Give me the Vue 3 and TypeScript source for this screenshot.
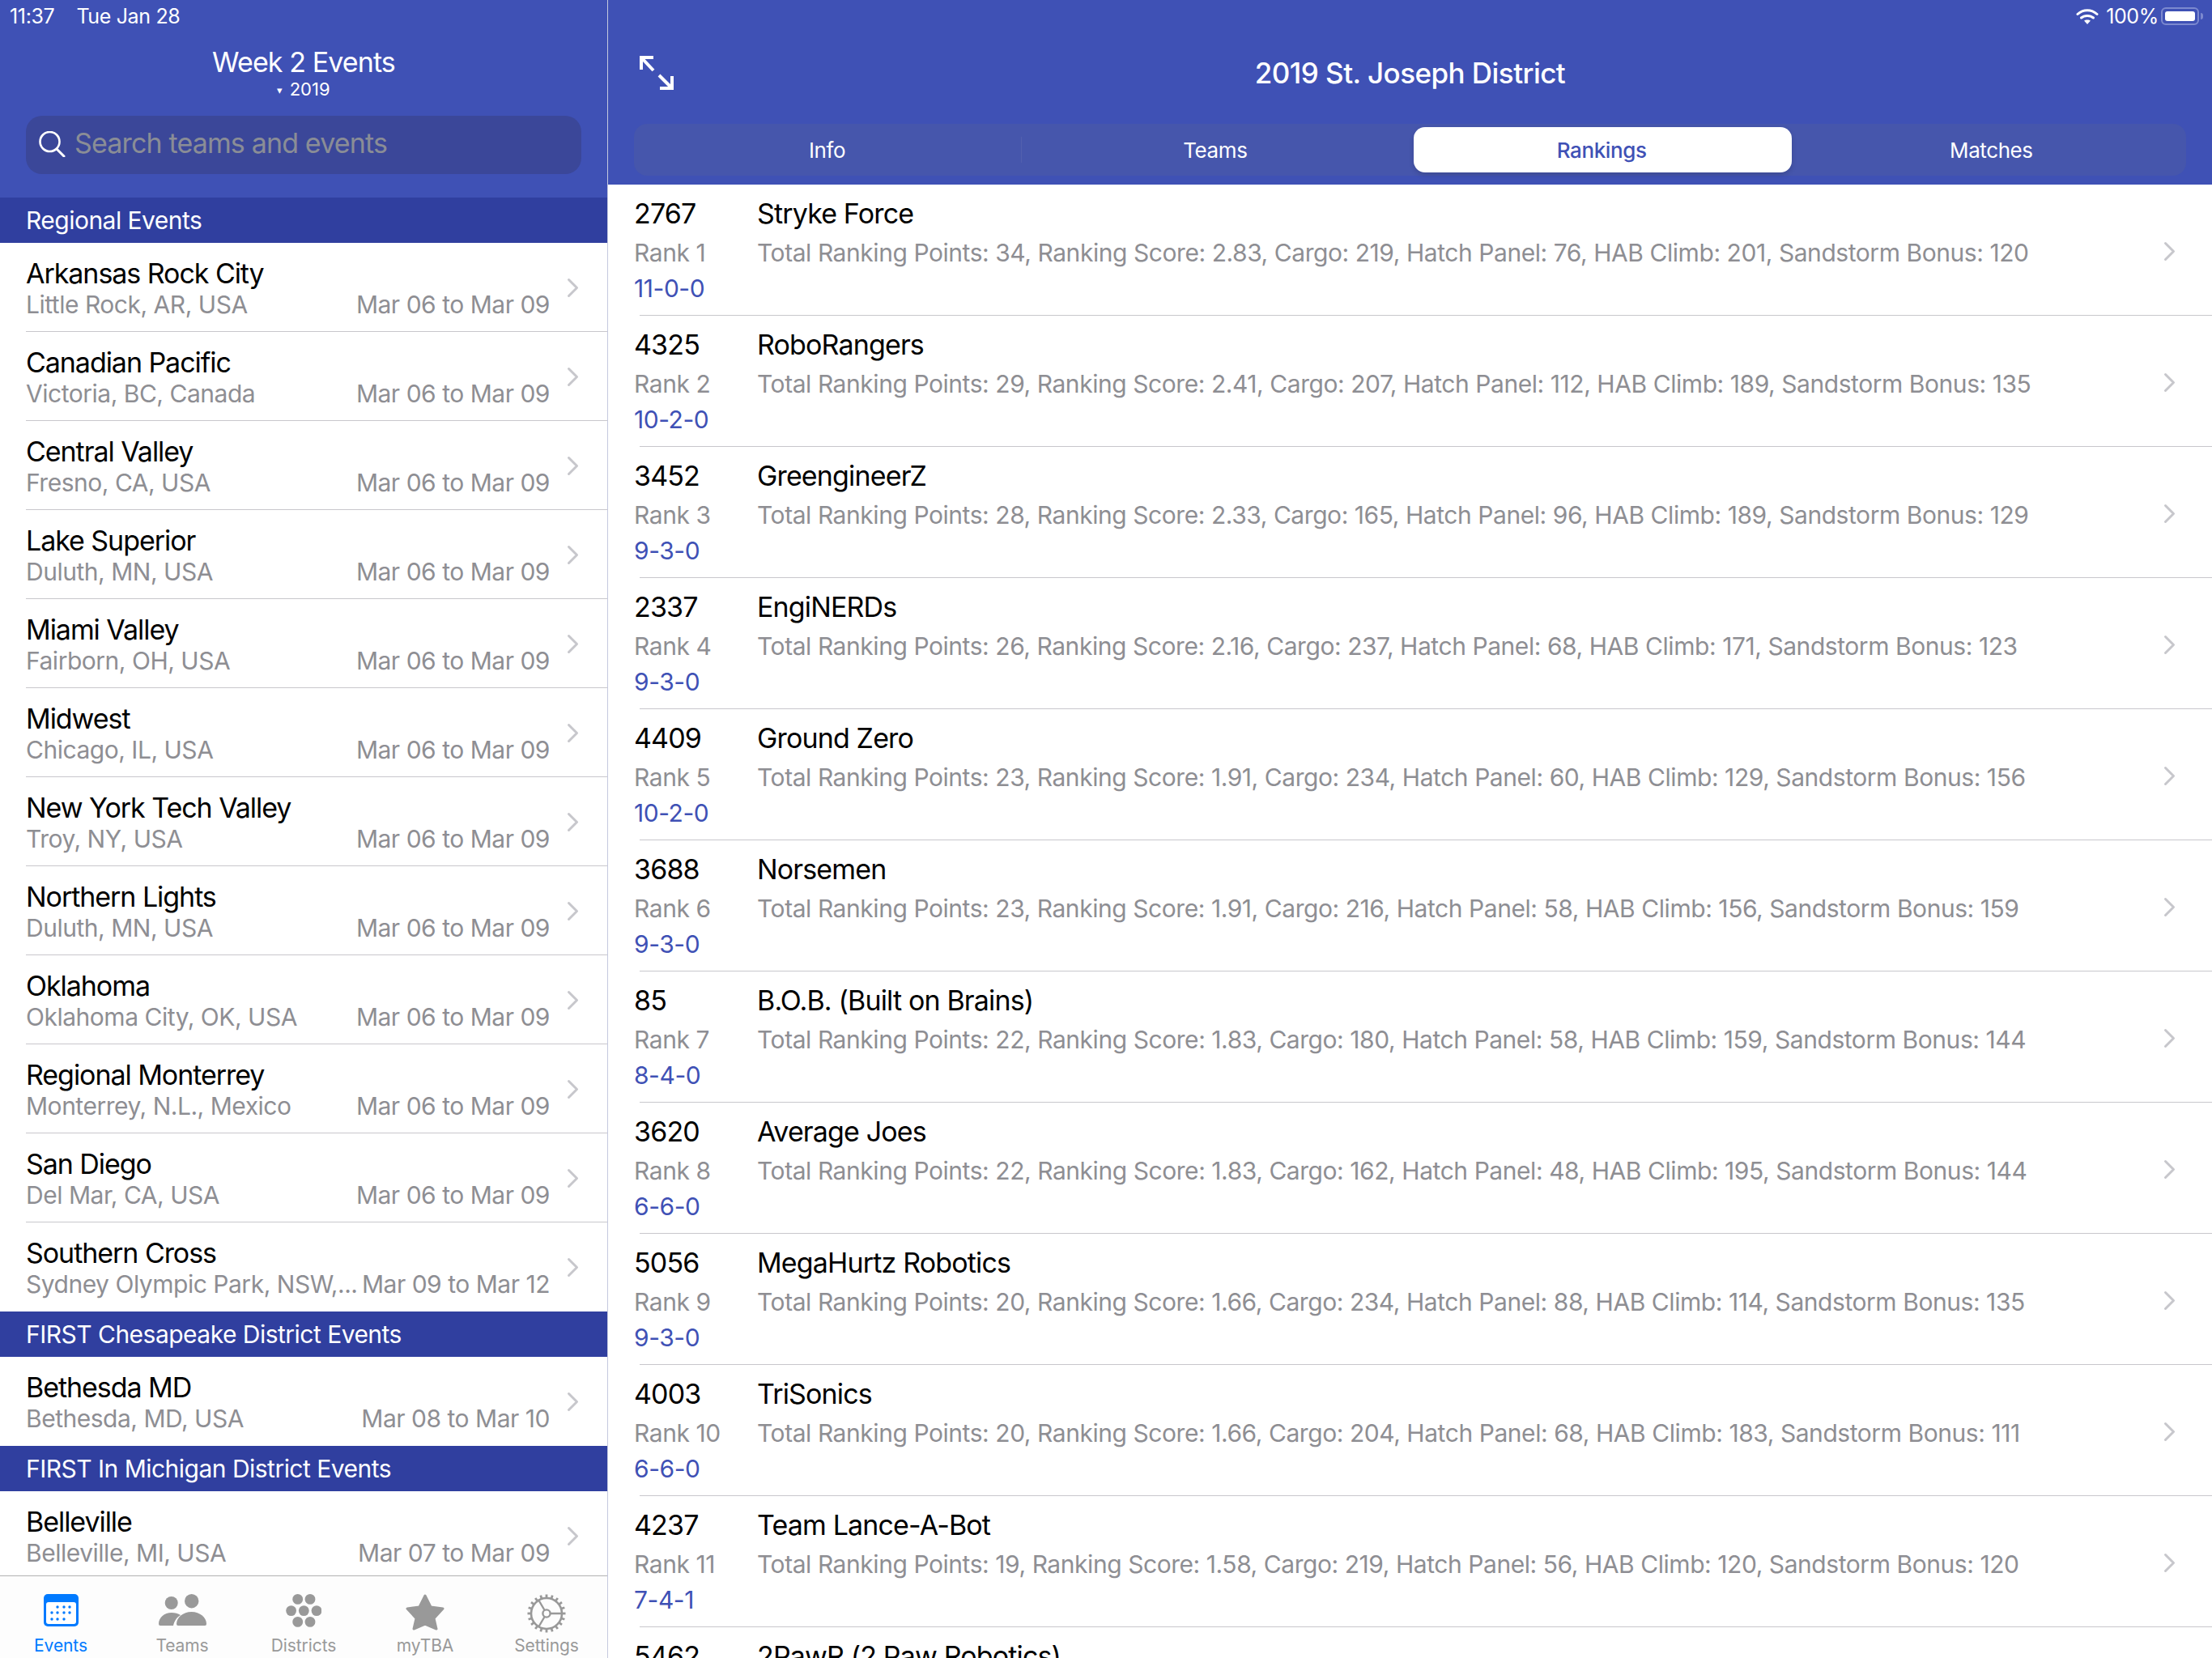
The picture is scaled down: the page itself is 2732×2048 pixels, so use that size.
<template>
  <div class="ipad">
    <aside class="sidebar">
      <header class="side-head">
        <div class="status">
          <span>11:37</span>
          <span class="status-date">Tue Jan 28</span>
        </div>
        <div class="side-title">Week 2 Events</div>
        <div class="side-year"><span class="caret">▾</span> 2019</div>
        <div class="search">
          <svg class="search-icon" viewBox="0 0 33 32" width="33" height="32">
            <circle cx="13.5" cy="13" r="12" fill="none" stroke="#fff" stroke-width="2.6" />
            <path d="M22 22 L31 31" fill="none" stroke="#fff" stroke-width="3" stroke-linecap="round" />
          </svg>
          <span class="search-text">Search teams and events</span>
        </div>
      </header>

      <div class="side-list">
        <section v-for="section in sections" :key="section.title">
          <h2 class="section-head">{{ section.title }}</h2>
          <div v-for="event in section.events" :key="event.name" class="event-row">
            <div class="event-body">
              <div class="event-name">{{ event.name }}</div>
              <div class="event-sub">
                <span>{{ event.place }}</span>
                <span>{{ event.dates }}</span>
              </div>
            </div>
            <svg class="chevron" viewBox="0 0 15 25" width="15" height="25">
              <path d="M2.5 2.5 L12.5 12.5 L2.5 22.5" fill="none" stroke="#c7c7cc" stroke-width="3" stroke-linecap="round" stroke-linejoin="round" />
            </svg>
          </div>
        </section>
      </div>

      <nav class="tabbar">
        <div class="tab active">
          <div class="tab-icon">
            <svg viewBox="0 0 43 40" width="43" height="40">
              <rect width="43" height="40" rx="5" fill="#007aff" />
              <rect x="3" y="10" width="37" height="27" rx="3" fill="#fff" />
              <circle v-for="d in calendarDots" :key="d[0] + '-' + d[1]" :cx="d[0]" :cy="d[1]" r="1.7" fill="#007aff" />
            </svg>
          </div>
          <span>Events</span>
        </div>
        <div class="tab">
          <div class="tab-icon">
            <svg viewBox="0 0 59 40" width="59" height="40">
              <circle cx="15.7" cy="11" r="8" fill="#999" />
              <circle cx="40.7" cy="8.7" r="8.7" fill="#999" />
              <path d="M0 37 C0 29 7 23 16 23 C20 23 24 24 27 26 C22 29 19 34 18 39 L2 39 Q0 39 0 37 Z" fill="#999" />
              <path d="M22 37 C22 29 30 22 40.5 22 C51 22 59 29 59 37 Q59 39 57 39 L24 39 Q22 39 22 37 Z" fill="#999" />
            </svg>
          </div>
          <span>Teams</span>
        </div>
        <div class="tab">
          <div class="tab-icon">
            <svg viewBox="0 0 44 41" width="44" height="41">
              <circle v-for="d in districtDots" :key="d[0] + '-' + d[1]" :cx="d[0]" :cy="d[1]" r="6.4" fill="#999" />
            </svg>
          </div>
          <span>Districts</span>
        </div>
        <div class="tab">
          <div class="tab-icon">
            <svg viewBox="0 0 48 46" width="48" height="46">
              <path d="M24 2 L31 16 L46 18 L35 30 L38 43 L24 37 L10 43 L13 30 L2 18 L17 16 Z" fill="#999" stroke="#999" stroke-width="3" stroke-linejoin="round" />
            </svg>
          </div>
          <span>myTBA</span>
        </div>
        <div class="tab">
          <div class="tab-icon">
            <svg viewBox="0 0 48 48" width="48" height="48">
              <circle cx="24" cy="24" r="19" fill="none" stroke="#999" stroke-width="2.6" />
              <circle cx="24" cy="24" r="4.6" fill="none" stroke="#999" stroke-width="2.4" />
              <path d="M28.6 24 H43 M21.6 28 L14 41 M21.6 20 L14 7" fill="none" stroke="#999" stroke-width="2.4" />
              <rect v-for="a in gearTeeth" :key="a" x="22.6" y="0.5" width="2.8" height="5" fill="#999" :transform="`rotate(${a} 24 24)`" />
            </svg>
          </div>
          <span>Settings</span>
        </div>
      </nav>
    </aside>

    <main class="detail">
      <header class="detail-head">
        <div class="status status-right">
          <svg viewBox="0 0 28 20" width="28" height="20">
            <path d="M2 7.5 C9 1 19 1 26 7.5" fill="none" stroke="#fff" stroke-width="3" stroke-linecap="round" />
            <path d="M6.5 12 C10.5 8.5 17.5 8.5 21.5 12" fill="none" stroke="#fff" stroke-width="3" stroke-linecap="round" />
            <path d="M14 20 L10 15.5 C12 14 16 14 18 15.5 Z" fill="#fff" />
          </svg>
          <span class="battery-text">100%</span>
          <span class="battery"><span class="battery-fill"></span></span>
          <span class="battery-tip"></span>
        </div>
        <div class="detail-nav">
          <svg class="expand" viewBox="0 0 42 42" width="42" height="42">
            <path d="M2 17 V2 H17 M2 2 L17 18" fill="none" stroke="#fff" stroke-width="4" />
            <path d="M40 25 V40 H25 M40 40 L24 24" fill="none" stroke="#fff" stroke-width="4" />
          </svg>
          <h1 class="detail-title">2019 St. Joseph District</h1>
        </div>
        <div class="segments">
          <div v-for="seg in segments" :key="seg" class="segment" :class="{ selected: seg === 'Rankings' }">{{ seg }}</div>
        </div>
      </header>

      <div class="team-list">
        <div v-for="team in teams" :key="team.number" class="team-row">
          <div class="team-left">
            <div class="team-number">{{ team.number }}</div>
            <div class="team-rank">Rank {{ team.rank }}</div>
            <div class="team-record">{{ team.record }}</div>
          </div>
          <div class="team-main">
            <div class="team-name">{{ team.name }}</div>
            <div class="team-stats">{{ team.stats }}</div>
          </div>
          <svg class="team-chevron" viewBox="0 0 15 25" width="15" height="25">
            <path d="M2.5 2.5 L12.5 12.5 L2.5 22.5" fill="none" stroke="#c7c7cc" stroke-width="3" stroke-linecap="round" stroke-linejoin="round" />
          </svg>
        </div>
      </div>
    </main>
  </div>
</template>

<script setup lang="ts">
interface EventItem {
  name: string
  place: string
  dates: string
}

interface Team {
  number: string
  rank: number
  record: string
  name: string
  stats: string
}

const usual = 'Mar 06 to Mar 09'

const sections: { title: string; events: EventItem[] }[] = [
  {
    title: 'Regional Events',
    events: [
      { name: 'Arkansas Rock City', place: 'Little Rock, AR, USA', dates: usual },
      { name: 'Canadian Pacific', place: 'Victoria, BC, Canada', dates: usual },
      { name: 'Central Valley', place: 'Fresno, CA, USA', dates: usual },
      { name: 'Lake Superior', place: 'Duluth, MN, USA', dates: usual },
      { name: 'Miami Valley', place: 'Fairborn, OH, USA', dates: usual },
      { name: 'Midwest', place: 'Chicago, IL, USA', dates: usual },
      { name: 'New York Tech Valley', place: 'Troy, NY, USA', dates: usual },
      { name: 'Northern Lights', place: 'Duluth, MN, USA', dates: usual },
      { name: 'Oklahoma', place: 'Oklahoma City, OK, USA', dates: usual },
      { name: 'Regional Monterrey', place: 'Monterrey, N.L., Mexico', dates: usual },
      { name: 'San Diego', place: 'Del Mar, CA, USA', dates: usual },
      { name: 'Southern Cross', place: 'Sydney Olympic Park, NSW,...', dates: 'Mar 09 to Mar 12' },
    ],
  },
  {
    title: 'FIRST Chesapeake District Events',
    events: [{ name: 'Bethesda MD', place: 'Bethesda, MD, USA', dates: 'Mar 08 to Mar 10' }],
  },
  {
    title: 'FIRST In Michigan District Events',
    events: [{ name: 'Belleville', place: 'Belleville, MI, USA', dates: 'Mar 07 to Mar 09' }],
  },
]

function stats(pts: number, score: string, cargo: number, hatch: number, hab: number, bonus: number) {
  return `Total Ranking Points: ${pts}, Ranking Score: ${score}, Cargo: ${cargo}, Hatch Panel: ${hatch}, HAB Climb: ${hab}, Sandstorm Bonus: ${bonus}`
}

const teams: Team[] = [
  { number: '2767', rank: 1, record: '11-0-0', name: 'Stryke Force', stats: stats(34, '2.83', 219, 76, 201, 120) },
  { number: '4325', rank: 2, record: '10-2-0', name: 'RoboRangers', stats: stats(29, '2.41', 207, 112, 189, 135) },
  { number: '3452', rank: 3, record: '9-3-0', name: 'GreengineerZ', stats: stats(28, '2.33', 165, 96, 189, 129) },
  { number: '2337', rank: 4, record: '9-3-0', name: 'EngiNERDs', stats: stats(26, '2.16', 237, 68, 171, 123) },
  { number: '4409', rank: 5, record: '10-2-0', name: 'Ground Zero', stats: stats(23, '1.91', 234, 60, 129, 156) },
  { number: '3688', rank: 6, record: '9-3-0', name: 'Norsemen', stats: stats(23, '1.91', 216, 58, 156, 159) },
  { number: '85', rank: 7, record: '8-4-0', name: 'B.O.B. (Built on Brains)', stats: stats(22, '1.83', 180, 58, 159, 144) },
  { number: '3620', rank: 8, record: '6-6-0', name: 'Average Joes', stats: stats(22, '1.83', 162, 48, 195, 144) },
  { number: '5056', rank: 9, record: '9-3-0', name: 'MegaHurtz Robotics', stats: stats(20, '1.66', 234, 88, 114, 135) },
  { number: '4003', rank: 10, record: '6-6-0', name: 'TriSonics', stats: stats(20, '1.66', 204, 68, 183, 111) },
  { number: '4237', rank: 11, record: '7-4-1', name: 'Team Lance-A-Bot', stats: stats(19, '1.58', 219, 56, 120, 120) },
  { number: '5462', rank: 12, record: '', name: '2PawR (2 Paw Robotics)', stats: '' },
]

const segments = ['Info', 'Teams', 'Rankings', 'Matches']

const calendarDots = [
  [17, 16], [25, 16], [32, 16],
  [10, 23], [17, 23], [25, 23], [32, 23],
  [10, 31], [17, 31], [25, 31],
]

const districtDots = [
  [14.7, 6.4], [30, 6.4],
  [6.6, 20.6], [22.3, 20.6], [38, 20.6],
  [14.7, 34.4], [30, 34.4],
]

const gearTeeth = Array.from({ length: 20 }, (_, i) => i * 18)
</script>

<style scoped>
.ipad {
  display: flex;
  width: 2732px;
  height: 2048px;
  overflow: hidden;
  background: #fff;
  font-family: Inter, "Noto Sans", sans-serif;
}

.sidebar {
  display: flex;
  flex-direction: column;
  width: 750px;
  height: 2048px;
  flex: none;
  border-right: 1px solid #c5c9de;
}

.side-head {
  height: 244px;
  flex: none;
  background: #3f51b5;
  color: #fff;
}

.status {
  display: flex;
  align-items: center;
  height: 40px;
  padding-left: 12px;
  font-size: 25px;
  letter-spacing: -0.35px;
  color: #fff;
}

.status-date {
  margin-left: 27px;
}

.side-title {
  margin-top: 15px;
  font-size: 34px;
  line-height: 44px;
  letter-spacing: -0.9px;
  text-align: center;
}

.side-year {
  font-size: 22px;
  line-height: 22px;
  text-align: center;
}

.caret {
  font-size: 13px;
  vertical-align: 2px;
  margin-right: 2px;
}

.search {
  display: flex;
  align-items: center;
  height: 72px;
  margin: 21px 32px 0 32px;
  padding: 0 0 2px 16px;
  box-sizing: border-box;
  border-radius: 20px;
  background: #3b4799;
}

.search-icon {
  flex: none;
}

.search-text {
  margin-left: 11px;
  padding-bottom: 3px;
  font-size: 34px;
  letter-spacing: -0.85px;
  color: #8a8d96;
}

.side-list {
  flex: 1;
  min-height: 0;
  overflow: hidden;
}

.section-head {
  height: 56px;
  margin: 0;
  padding-left: 32px;
  background: #303f9f;
  color: #fff;
  font-size: 30px;
  font-weight: 400;
  line-height: 56px;
  letter-spacing: -0.52px;
}

.event-row {
  position: relative;
  display: flex;
  align-items: center;
  height: 110px;
  padding-left: 32px;
}

.event-row:not(:last-child)::after {
  content: "";
  position: absolute;
  left: 32px;
  right: 0;
  bottom: 0;
  height: 1px;
  background: #c8c7cc;
}

.event-body {
  width: 647px;
  flex: none;
  padding-bottom: 1px;
}

.event-name {
  margin-top: 4px;
  font-size: 34px;
  line-height: 38px;
  letter-spacing: -1.05px;
  color: #000;
}

.event-sub {
  display: flex;
  justify-content: space-between;
  font-size: 30px;
  line-height: 38px;
  letter-spacing: -0.48px;
  color: #8e8e93;
}

.chevron {
  margin-left: 21px;
  flex: none;
}

.tabbar {
  display: grid;
  grid-template-columns: repeat(5, 1fr);
  height: 101px;
  flex: none;
  border-top: 1px solid #b2b2b2;
  background: #fdfdfd;
}

.tab {
  display: flex;
  flex-direction: column;
  align-items: center;
  font-size: 21px;
  color: #999;
}

.tab.active {
  color: #007aff;
}

.tab-icon {
  display: flex;
  align-items: flex-start;
  height: 50px;
  margin-top: 22px;
}

.tab-icon svg {
  display: block;
}

.tab span {
  margin-top: 2px;
  line-height: 24px;
  letter-spacing: -0.1px;
}

.detail {
  flex: 1;
  min-width: 0;
  height: 2048px;
  display: flex;
  flex-direction: column;
}

.detail-head {
  height: 228px;
  flex: none;
  background: #3f51b5;
  color: #fff;
}

.status-right {
  justify-content: flex-end;
  padding: 0 11px 0 0;
}

.battery-text {
  margin-left: 9px;
}

.battery {
  display: flex;
  width: 47px;
  height: 22px;
  margin-left: 3px;
  padding: 3px;
  box-sizing: border-box;
  border: 2px solid #7c89cf;
  border-radius: 6px;
}

.battery-fill {
  flex: 1;
  border-radius: 3px;
  background: #fff;
}

.battery-tip {
  width: 3px;
  height: 8px;
  margin-left: 2px;
  border-radius: 0 3px 3px 0;
  background: #7c89cf;
}

.detail-nav {
  position: relative;
  display: flex;
  align-items: center;
  justify-content: center;
  height: 100px;
}

.expand {
  position: absolute;
  left: 39px;
  top: 29px;
}

.detail-title {
  margin: 0;
  font-size: 35px;
  font-weight: 500;
  letter-spacing: -0.55px;
}

.segments {
  display: grid;
  grid-template-columns: repeat(4, 1fr);
  height: 64px;
  margin: 13px 32px 0;
  border-radius: 16px;
  background: #4656ac;
}

.segment {
  position: relative;
  display: flex;
  align-items: center;
  justify-content: center;
  padding-right: 2px;
  font-size: 26px;
  letter-spacing: -0.4px;
  color: #fff;
}

.segment:first-child::after {
  content: "";
  position: absolute;
  right: 0;
  top: 16px;
  bottom: 16px;
  width: 1px;
  background: #5260ae;
}

.segment.selected {
  margin: 4px 8px 4px 4px;
  border-radius: 14px;
  background: #fff;
  color: #3f51b5;
  font-weight: 500;
  box-shadow: 0 3px 6px rgba(0, 0, 0, 0.15);
}

.team-list {
  flex: 1;
  min-height: 0;
  overflow: hidden;
}

.team-row {
  position: relative;
  display: flex;
  height: 162px;
  padding: 11px 0 0 32px;
  box-sizing: border-box;
}

.team-row::after {
  content: "";
  position: absolute;
  left: 39px;
  right: 0;
  bottom: 0;
  height: 1px;
  background: #c8c7cc;
}

.team-left {
  width: 152px;
  flex: none;
}

.team-number,
.team-name {
  font-size: 34px;
  line-height: 50px;
  letter-spacing: -0.85px;
  color: #000;
}

.team-rank,
.team-stats {
  padding-top: 1px;
  font-size: 30px;
  line-height: 45px;
  letter-spacing: -0.44px;
  color: #8e8e93;
  white-space: nowrap;
}

.team-record {
  font-size: 30px;
  line-height: 42px;
  letter-spacing: -0.44px;
  color: #3f51b5;
}

.team-main {
  flex: 1;
  min-width: 0;
}

.team-chevron {
  position: absolute;
  left: 1921px;
  top: 70px;
}
</style>

<style>
html,
body {
  margin: 0;
  background: #fff;
  overflow: hidden;
}
</style>
